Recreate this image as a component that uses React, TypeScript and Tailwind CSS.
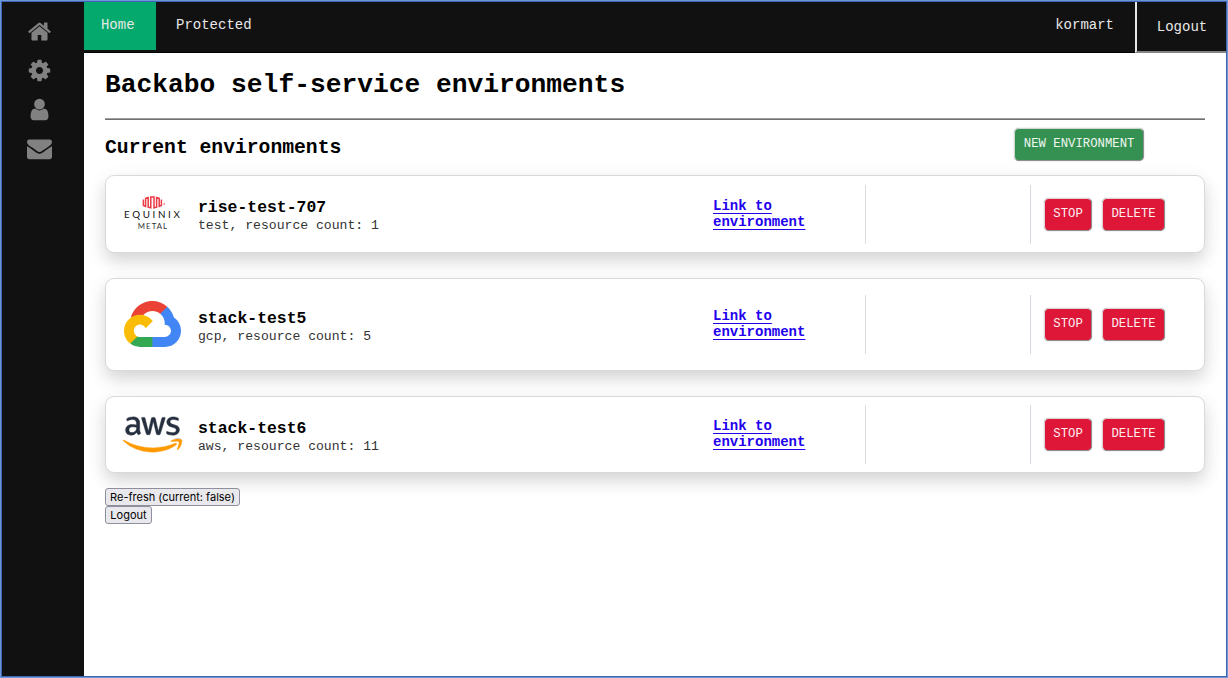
import React from "react";
import { FaAws } from "react-icons/fa";

const sideIcons: { name: string; d: string }[] = [
  {
    name: "home",
    d: "M1472 992v480q0 26-19 45t-45 19h-384v-384h-256v384h-384q-26 0-45-19t-19-45v-480q0-1 .5-3t.5-3l575-474 575 474q1 2 1 6zm223-69l-62 74q-8 9-21 11h-3q-13 0-21-7l-692-577-692 577q-12 8-24 7-13-2-21-11l-62-74q-8-10-7-23.5t11-21.5l719-599q32-26 76-26t76 26l244 204v-195q0-14 9-23t23-9h192q14 0 23 9t9 23v408l219 182q10 8 11 21.5t-7 23.5z",
  },
  {
    name: "settings",
    d: "M1152 896q0-106-75-181t-181-75-181 75-75 181 75 181 181 75 181-75 75-181zm512-109v222q0 12-8 23t-20 13l-185 28q-19 54-39 91 35 50 107 138 10 12 10 25t-9 23q-27 37-99 108t-94 71q-12 0-26-9l-138-108q-44 23-91 38-16 136-29 186-7 28-36 28h-222q-14 0-24.5-8.5t-11.5-21.5l-28-184q-49-16-90-37l-141 107q-10 9-25 9-14 0-25-11-126-114-165-168-7-10-7-23 0-12 8-23 15-21 51-66.5t54-70.5q-27-50-41-99l-183-27q-13-2-21-12.5t-8-23.5v-222q0-12 8-23t19-13l186-28q14-46 39-92-40-57-107-138-10-12-10-24 0-10 9-23 26-36 98.5-107.5t94.5-71.5q13 0 26 10l138 107q44-23 91-38 16-136 29-186 7-28 36-28h222q14 0 24.5 8.5t11.5 21.5l28 184q49 16 90 37l142-107q9-9 24-9 13 0 25 10 129 119 165 170 7 8 7 22 0 12-8 23-15 21-51 66.5t-54 70.5q26 50 41 98l183 28q13 2 21 12.5t8 23.5z",
  },
  {
    name: "user",
    d: "M1536 1399q0 109-62.5 187t-150.5 78h-854q-88 0-150.5-78t-62.5-187q0-85 8.5-160.5t31.5-152 58.5-131 94-89 134.5-34.5q131 128 313 128t313-128q76 0 134.5 34.5t94 89 58.5 131 31.5 152 8.5 160.5zm-256-887q0 159-112.5 271.5t-271.5 112.5-271.5-112.5-112.5-271.5 112.5-271.5 271.5-112.5 271.5 112.5 112.5 271.5z",
  },
  {
    name: "mail",
    d: "M1792 710v794q0 66-47 113t-113 47h-1472q-66 0-113-47t-47-113v-794q44 49 101 87 362 246 497 345 57 42 92.5 65.5t94.5 48 110 24.5h2q51 0 110-24.5t94.5-48 92.5-65.5q170-123 498-345 57-39 100-87zm0-294q0 79-49 151t-122 123q-376 261-468 325-10 7-42.5 31t-54 38.5-52 32.5-57.5 27-50 9h-2q-23 0-50-9t-57.5-27-52-32.5-54-38.5-42.5-31q-91-64-262-182.5t-205-142.5q-62-42-117-115.5t-55-136.5q0-78 41.5-130t118.5-52h1472q65 0 112.5 47t47.5 113z",
  },
];

function EquinixLogo() {
  return (
    <div className="mb-[2px] flex w-[58px] flex-col items-center font-['Lato',sans-serif]">
      <svg width="26" height="13" viewBox="0 0 26 13" className="ml-[3px]">
        <path
          d="M2.4 3.4V9.4L4.6 10.4V2.4L7.2 1.6V11.2L9.8 11.8V1.1H13V11.8L15.6 11.2V1.6L18.2 2.4V10.4L20.4 9.4V3.4"
          fill="none"
          stroke="#ea3a43"
          strokeWidth="1.5"
        />
        <circle cx="23.2" cy="8" r="0.9" fill="#f2868b" />
      </svg>
      <span className="mr-[-2.6px] text-[9.8px] leading-[11px] tracking-[2.65px] text-[#111]">
        EQUINIX
      </span>
      <span className="mr-[-2px] mt-px text-[7.8px] leading-[10px] tracking-[1.05px] text-[#333]">METAL</span>
    </div>
  );
}

function GcpLogo() {
  return (
    <svg width="57" height="46" viewBox="0 0 256 206" className="mb-[2px]">
      <path
        fill="#EA4335"
        d="M170.25 56.82L192.5 34.57L193.99 25.2C153.44-11.68 88.98-7.5 52.42 33.92C42.27 45.42 34.73 59.76 30.72 74.57L38.69 73.45L83.19 66.11L86.63 62.6C106.42 40.85 139.9 37.93 162.76 56.43Z"
      />
      <path
        fill="#4285F4"
        d="M224.2 73.92C219.09 55.08 208.59 38.15 193.99 25.2L162.76 56.43C175.94 67.2 183.46 83.44 183.13 100.47V106.01C198.49 106.01 210.93 118.45 210.93 133.81C210.93 149.16 198.49 161.29 183.13 161.29H127.46L122 167.22V200.56L127.46 205.8H183.13C223.06 206.11 255.69 174.3 256 134.37C256.19 110.17 244.25 87.48 224.2 73.92"
      />
      <path
        fill="#34A853"
        d="M71.87 205.8H127.46V161.29H71.87C67.91 161.29 64.07 160.44 60.47 158.79L52.58 161.21L30.18 183.46L28.22 191.04C40.79 200.53 56.12 205.86 71.87 205.8"
      />
      <path
        fill="#FBBC05"
        d="M71.87 61.43C31.94 61.66-.24 94.23 0 134.16C.13 156.46 10.55 177.45 28.22 191.04L60.47 158.79C46.48 152.47 40.26 136.01 46.58 122.02C52.9 108.03 69.37 101.81 83.36 108.13C89.52 110.91 94.46 115.85 97.25 122.02L129.49 89.77C115.77 71.83 94.45 61.34 71.87 61.43"
      />
    </svg>
  );
}

function AwsLogo() {
  return (
    <>
      <svg width="0" height="0" className="absolute">
        <linearGradient id="aws" gradientUnits="userSpaceOnUse" x1="0" y1="0" x2="0" y2="512">
          <stop offset="0.6" stopColor="#252f3e" />
          <stop offset="0.6" stopColor="#ff9900" />
        </linearGradient>
      </svg>
      <FaAws className="h-[47px] w-[59px] overflow-visible" fill="url(#aws)" stroke="url(#aws)" strokeWidth="5" />
    </>
  );
}

interface Environment {
  name: string;
  detail: string;
  logo: React.ReactNode;
  height: string;
}

const environments: Environment[] = [
  { name: "rise-test-707", detail: "test, resource count: 1", logo: <EquinixLogo />, height: "h-[78px]" },
  { name: "stack-test5", detail: "gcp, resource count: 5", logo: <GcpLogo />, height: "h-[93px]" },
  { name: "stack-test6", detail: "aws, resource count: 11", logo: <AwsLogo />, height: "h-[77px]" },
];

function DangerButton({ children }: { children: React.ReactNode }) {
  return (
    <button className="h-[33px] rounded-[5px] border border-t-[#e0d4d6] border-r-[#8f8f8f] border-b-[#8f8f8f] border-l-[#e0d4d6] bg-[#de1738] px-[8.3px] text-[12.3px] leading-none text-[#fdeef0] shadow-[0_0_1px_rgba(90,90,90,0.8)]">
      {children}
    </button>
  );
}

function EnvironmentCard({ env }: { env: Environment }) {
  return (
    <div
      className={`${env.height} flex items-center rounded-[9px] border border-[#d9d9d9] bg-white shadow-[0_8px_16px_rgba(0,0,0,0.13),0_6px_26px_rgba(0,0,0,0.05)]`}
    >
      <div className="flex w-[92px] justify-center">{env.logo}</div>
      <div className="w-[515px] pt-[4px]">
        <div className="text-[16.43px] leading-[19px] font-bold text-black">{env.name}</div>
        <div className="text-[13.12px] leading-[17px] text-[#333]">{env.detail}</div>
      </div>
      <div className="w-[152px] pb-px text-[14px] leading-[16px] font-bold">
        <a href="#" className="block w-[100px] text-[#2200ee] underline decoration-[1.3px] underline-offset-[3px]">
          Link to environment
        </a>
      </div>
      <div className="h-[59px] w-[165px] border-l border-[#dcdce0]" />
      <div className="flex h-[59px] items-center gap-[10px] border-l border-[#d8dae2] pl-[13px]">
        <DangerButton>STOP</DangerButton>
        <DangerButton>DELETE</DangerButton>
      </div>
    </div>
  );
}

export default function App() {
  return (
    <div className="h-[678px] w-[1228px] border border-[#6f97d8] bg-white font-['Liberation_Mono',monospace]">
      <div className="flex h-full border border-[#3c66b4]">
        <aside className="flex w-[82px] flex-col items-center gap-[14px] bg-[#111] pt-[17px] pr-[8px]">
          {sideIcons.map((icon) => (
            <svg key={icon.name} width="25" height="25" viewBox="0 0 1792 1792" fill="#818181">
              <path d={icon.d} />
            </svg>
          ))}
        </aside>
        <div className="flex min-w-0 flex-1 flex-col">
          <nav className="flex h-[51px] border-b border-black bg-[#111] text-[14px] text-[#e8e8e8]">
            <a className="flex h-[48px] w-[71.5px] items-center justify-center bg-[#04AA6D] pr-[4px] pb-px">Home</a>
            <a className="flex h-[48px] items-center pb-px pl-[20.5px]">Protected</a>
            <span className="ml-auto flex h-[48px] items-center pr-[21px] pb-px">kormart</span>
            <button className="h-[51px] w-[91px] border-b-2 border-l-2 border-b-[#858585] border-l-[#e6e6e6] pt-px pl-px">
              Logout
            </button>
          </nav>
          <main className="flex flex-col pr-[21px] pl-[21px]">
            <h1 className="mt-[17px] text-[26.27px] leading-[30px] font-bold text-black">
              Backabo self-service environments
            </h1>
            <hr className="mt-[18px] h-[2px] border-t border-b border-t-[#a0a0a0] border-b-[#707070]" />
            <div className="flex h-[55px] items-start justify-between pt-[8px] pr-[61px]">
              <h2 className="mt-[9px] text-[19.7px] leading-[23px] font-bold text-black">Current environments</h2>
              <button className="h-[33px] rounded-[5px] border border-t-[#cfd8d2] border-r-[#8f8f8f] border-b-[#8f8f8f] border-l-[#cfd8d2] bg-[#349152] px-[8.5px] pb-px text-[12.3px] leading-none text-[#eef7f0] shadow-[0_0_1px_rgba(90,90,90,0.8)]">
                NEW ENVIRONMENT
              </button>
            </div>
            <div className="flex flex-col gap-[25px]">
              {environments.map((env) => (
                <EnvironmentCard key={env.name} env={env} />
              ))}
            </div>
            <div className="z-10 mt-[15px] flex flex-col items-start font-['Inter',sans-serif] text-[11px] leading-[16px] text-black">
              <button className="h-[18px] w-[135px] rounded-[3px] border border-[#8f8f9d] bg-[#e9e9ed] whitespace-nowrap">
                Re-fresh (current: false)
              </button>
              <button className="h-[18px] w-[47px] rounded-[3px] border border-[#8f8f9d] bg-[#e9e9ed]">Logout</button>
            </div>
          </main>
        </div>
      </div>
    </div>
  );
}
